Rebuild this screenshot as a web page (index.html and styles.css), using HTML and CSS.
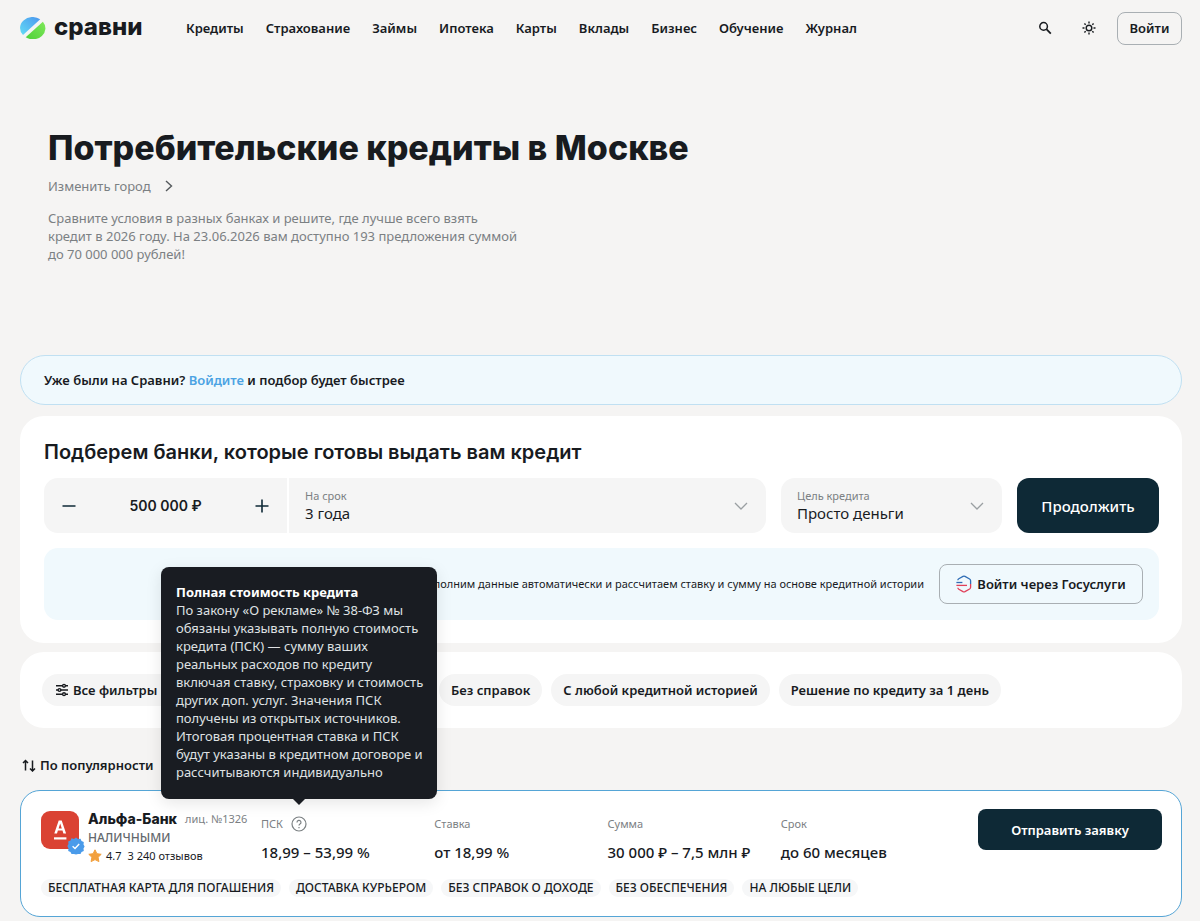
FILE: index.html
```
<!DOCTYPE html>
<html lang="ru">
<head>
<meta charset="utf-8">
<meta name="viewport" content="width=device-width, initial-scale=1">
<title>Потребительские кредиты в Москве</title>
<link rel="stylesheet" href="styles.css">
</head>
<body>
<header class="header">
  <a class="logo" href="#" aria-label="Сравни">
    <svg class="logo-mark" viewBox="0 0 26 22" aria-hidden="true">
      <defs>
        <linearGradient id="sky" x1="0" y1="1" x2="1" y2="0"><stop offset="0" stop-color="#63dcf5"/><stop offset="1" stop-color="#4b96ee"/></linearGradient>
        <linearGradient id="leaf" x1="0" y1="1" x2="1" y2="0"><stop offset="0" stop-color="#4fd038"/><stop offset="1" stop-color="#7fe85a"/></linearGradient>
      </defs>
      <path d="M3 18.1A12.500 11 0 0 1 20.200 2.300Z" fill="url(#sky)"/>
      <path d="M22.900 4.700A12.500 11 0 0 1 5.700 20.300Z" fill="url(#leaf)"/>
    </svg>
    <span class="logo-word">сравни</span>
  </a>
  <nav class="nav">
    <a href="#">Кредиты</a><a href="#">Страхование</a><a href="#">Займы</a><a href="#">Ипотека</a><a href="#">Карты</a><a href="#">Вклады</a><a href="#">Бизнес</a><a href="#">Обучение</a><a href="#">Журнал</a>
  </nav>
  <div class="tools">
    <button class="icon-button" type="button" aria-label="Поиск">
      <svg viewBox="0 0 14 14" fill="none" stroke="currentColor" aria-hidden="true"><circle cx="5.6" cy="5.4" r="3.8" stroke-width="1.5"/><path d="M8.4 8.2 12.8 12.6" stroke-width="1.8"/></svg>
    </button>
    <button class="icon-button" type="button" aria-label="Тема">
      <svg viewBox="0 0 14 14" fill="none" stroke="currentColor" stroke-width="1.4" aria-hidden="true"><circle cx="7" cy="7" r="2.8"/><path d="M7 .5v2M7 11.5v2M.5 7h2M11.5 7h2M2.4 2.4l1.3 1.3M10.3 10.3l1.3 1.3M2.4 11.6l1.3-1.3M10.3 3.7l1.3-1.3"/></svg>
    </button>
    <button class="outline-button login" type="button">Войти</button>
  </div>
</header>

<main class="page">
  <section class="hero">
    <h1>Потребительские кредиты в Москве</h1>
    <a class="city" href="#">Изменить город
      <svg viewBox="0 0 8 12" fill="none" stroke="currentColor" stroke-width="1.4" aria-hidden="true"><path d="M1 1l5.5 5L1 11"/></svg>
    </a>
    <p>Сравните условия в разных банках и решите, где лучше всего взять кредит в 2026 году. На 23.06.2026 вам доступно 193 предложения суммой до&nbsp;70&nbsp;000&nbsp;000&nbsp;рублей!</p>
  </section>

  <p class="notice">Уже были на Сравни? <a href="#">Войдите</a> и подбор будет быстрее</p>

  <section class="card picker">
    <h2>Подберем банки, которые готовы выдать вам кредит</h2>
    <form class="form">
      <div class="joined">
        <div class="stepper">
          <button type="button" aria-label="Уменьшить"><svg viewBox="0 0 14 14" fill="none" stroke="currentColor" stroke-width="1.6" aria-hidden="true"><path d="M.5 7h13"/></svg></button>
          <input type="text" aria-label="Сумма кредита" value="500 000 ₽">
          <button type="button" aria-label="Увеличить"><svg viewBox="0 0 14 14" fill="none" stroke="currentColor" stroke-width="1.6" aria-hidden="true"><path d="M.5 7h13M7 .5v13"/></svg></button>
        </div>
        <div class="field term">
          <div class="field-body">
            <label for="term">На срок</label>
            <select id="term"><option>3 года</option></select>
          </div>
          <svg class="chevron" viewBox="0 0 14 8" fill="none" stroke="currentColor" stroke-width="1.3" aria-hidden="true"><path d="M1 1l6 6 6-6"/></svg>
        </div>
      </div>
      <div class="field goal">
        <div class="field-body">
          <label for="goal">Цель кредита</label>
          <select id="goal"><option>Просто деньги</option></select>
        </div>
        <svg class="chevron" viewBox="0 0 14 8" fill="none" stroke="currentColor" stroke-width="1.3" aria-hidden="true"><path d="M1 1l6 6 6-6"/></svg>
      </div>
      <button class="primary continue" type="submit">Продолжить</button>
    </form>
    <div class="gov">
      <p>Заполним данные автоматически и рассчитаем ставку и сумму на основе кредитной истории</p>
      <button class="outline-button gov-button" type="button">
        <svg viewBox="0 0 16 18" fill="none" stroke-width="1.3" aria-hidden="true">
          <path d="M1.800 5.200Q1.900 4.300 2.800 3.800L7 1.400Q8 .9 9 1.400L13.600 4Q14.600 4.600 14.600 5.700V9" stroke="#2f6db5"/>
          <path d="M14.600 9V12.300Q14.600 13.400 13.600 14L9 16.600Q8 17.100 7 16.600L2.800 14.200Q1.900 13.700 1.800 12.800" stroke="#e0405a"/>
          <path d="M.4 7.500h6" stroke="#2f6db5"/>
          <path d="M.4 10.400h10.600" stroke="#e0405a"/>
        </svg>
        Войти через Госуслуги
      </button>
    </div>
  </section>

  <section class="card filters">
    <button class="chip all" type="button">
      <svg viewBox="0 0 14 14" fill="none" stroke="currentColor" stroke-width="1.4" aria-hidden="true"><path d="M1 2.8h12M1 7h12M1 11.2h12"/><circle cx="9" cy="2.8" r="1.4" fill="#f5f5f5"/><circle cx="4.500" cy="7" r="1.4" fill="#f5f5f5"/><circle cx="9" cy="11.2" r="1.4" fill="#f5f5f5"/></svg>
      Все фильтры
    </button>
    <button class="chip" type="button">Без справок</button>
    <button class="chip" type="button">С любой кредитной историей</button>
    <button class="chip" type="button">Решение по кредиту за 1 день</button>
  </section>

  <button class="sort" type="button">
    <svg viewBox="0 0 14 14" fill="none" stroke="currentColor" stroke-width="1.5" aria-hidden="true"><path d="M3.5 12.500V2.500M1 5l2.500-2.500L6 5M10.500 2.500V13M8 10.500l2.500 2.500 2.500-2.500"/></svg>
    По популярности
  </button>

  <article class="offer">
    <div class="offer-main">
      <div class="bank">
        <div class="bank-logo">
          <svg viewBox="0 0 38 38" aria-hidden="true"><path fill-rule="evenodd" d="M13.300 22.500 17.700 9.500h3L25.100 22.500h-2.700l-.9-2.900h-4.600l-.9 2.900zM17.600 17.400h3.200l-1.600-5z" fill="#fff"/><path d="M13 27.400h12.400" stroke="#fff" stroke-width="2.200"/></svg>
          <svg class="verified" viewBox="0 0 18 18" aria-hidden="true"><path d="M9 .6l2 1.500 2.500-.3 1 2.300 2.300 1-.3 2.500L17.600 9.400l-1.100 2 .3 2.500-2.300 1-1 2.200-2.500-.2L9 17.600l-2-.7-2.500.2-1-2.200-2.300-1 .3-2.500L.4 9l1.100-2-.3-2.500 2.300-1 1-2.200L7 2z" fill="#4a9bea"/><path d="M5.600 9.300 8 11.500l4.200-4.400" fill="none" stroke="#fff" stroke-width="1.4"/></svg>
        </div>
        <div class="bank-info">
          <div class="bank-name"><h3>Альфа-Банк</h3><span>лиц. №1326</span></div>
          <div class="product">НАЛИЧНЫМИ</div>
          <div class="rating">
            <svg viewBox="0 0 14 14" aria-hidden="true"><path d="M7 .8l1.900 3.900 4.300.6-3.100 3 .8 4.300L7 10.600l-3.900 2 .8-4.300-3.100-3 4.300-.6z" fill="#f2a03d" stroke="#f2a03d" stroke-linejoin="round"/></svg>
            <span>4.7</span><a href="#">3 240 отзывов</a>
          </div>
        </div>
      </div>
      <dl class="terms">
        <div>
          <dt>ПСК
            <span class="hint">
              <button type="button" aria-label="Полная стоимость кредита" aria-describedby="psk">
                <svg viewBox="0 0 16 16" fill="none" stroke="currentColor" stroke-width="1.2" aria-hidden="true"><circle cx="8" cy="8" r="7"/><path d="M6 6.500a2 2 0 1 1 3 1.600c-.7.400-1 .7-1 1.500M8 10.900v1.300"/></svg>
              </button>
              <span class="tooltip" id="psk" role="tooltip"><strong>Полная стоимость кредита</strong>По закону «О рекламе» № 38-ФЗ мы обязаны указывать полную стоимость кредита (ПСК) — сумму ваших реальных расходов по кредиту включая ставку, страховку и стоимость других доп. услуг. Значения ПСК получены из открытых источников. Итоговая процентная ставка и ПСК будут указаны в кредитном договоре и рассчитываются индивидуально</span>
            </span>
          </dt>
          <dd>18,99 – 53,99 %</dd>
        </div>
        <div><dt>Ставка</dt><dd>от 18,99 %</dd></div>
        <div><dt>Сумма</dt><dd>30 000 ₽ – 7,5 млн ₽</dd></div>
        <div><dt>Срок</dt><dd>до 60 месяцев</dd></div>
      </dl>
      <button class="primary apply" type="button">Отправить заявку</button>
    </div>
    <ul class="tags">
      <li>БЕСПЛАТНАЯ КАРТА ДЛЯ ПОГАШЕНИЯ</li><li>ДОСТАВКА КУРЬЕРОМ</li><li>БЕЗ СПРАВОК О ДОХОДЕ</li><li>БЕЗ ОБЕСПЕЧЕНИЯ</li><li>НА ЛЮБЫЕ ЦЕЛИ</li>
    </ul>
  </article>
</main>
</body>
</html>
```
FILE: styles.css
```
:root {
  --ink: #181b1f;
  --muted: #7b8083;
  --navy: #0e2936;
  --field: #f5f5f5;
  --sky: #f0f9fd;
  --display: Inter, "Liberation Sans", sans-serif;
}
* { box-sizing: border-box; }
body {
  margin: 0;
  background: #f5f4f3;
  color: var(--ink);
  font: 600 13px/18px "Noto Sans", sans-serif;
}
h1, h2, h3, p, ul, dl, dd { margin: 0; padding: 0; }
a { color: inherit; text-decoration: none; }
button, input, select { font: inherit; color: inherit; }
button { padding: 0; border: 0; background: none; cursor: pointer; }
svg { display: block; flex: none; }

.header { display: flex; align-items: center; height: 56px; padding: 0 18px 0 20px; }
.logo { display: flex; align-items: center; gap: 8px; width: 166px; }
.logo-mark { width: 26px; height: 22px; }
.logo-word { padding-bottom: 2px; font: 800 24px/26px var(--display); }
.nav { display: flex; gap: 22px; flex: 1; }
.tools { display: flex; align-items: center; gap: 12px; }
.icon-button { display: grid; place-items: center; width: 32px; height: 32px; }
.icon-button svg { width: 14px; height: 14px; }
.outline-button { border: 1px solid #a9afb3; border-radius: 8px; }
.login { width: 65px; height: 33px; }

.page { padding: 0 18px 4px 20px; }
.hero { min-height: 299px; padding: 72px 28px 0; color: var(--muted); font-weight: 400; }
.hero h1 { color: var(--ink); font: 800 34px/40px var(--display); }
.city { display: inline-flex; align-items: center; gap: 14px; margin: 9px 0 14px; }
.city svg { width: 8px; height: 12px; color: #55595c; }
.hero p { max-width: 470px; }

.notice { padding: 15px 23px; border: 1px solid #c0e0f2; border-radius: 25px; background: var(--sky); }
.notice a { color: #4ba3e3; }
.card { border-radius: 24px; background: #fff; }
.picker { margin-top: 11px; padding: 23px 23px 23px 24px; }
.picker h2 { font: 600 20px/26px var(--display); }
.form { display: flex; gap: 15px; margin-top: 13px; }
.joined { display: flex; flex: 1; gap: 2px; overflow: hidden; border-radius: 14px; }
.stepper { display: flex; align-items: center; width: 243px; height: 55px; padding: 0 18px; background: var(--field); }
.stepper input { flex: 1; min-width: 0; border: 0; background: none; text-align: center; font: 600 14px/20px var(--display); }
.stepper button { color: var(--navy); }
.stepper svg { width: 14px; height: 14px; }
.field { display: flex; align-items: center; padding: 0 18px 0 16px; background: var(--field); }
.field-body { display: flex; flex: 1; flex-direction: column; min-width: 0; }
.field label { color: var(--muted); font: 400 11px/15px "Noto Sans", sans-serif; }
.field select { appearance: none; padding: 0; border: 0; background: none; font-size: 15px; font-weight: 400; line-height: 20px; }
.term { flex: 1; }
.goal { width: 221px; border-radius: 14px; }
.chevron { width: 14px; height: 8px; color: #9a9fa2; }
.primary { background: var(--navy); color: #fff; }
.continue { width: 142px; border-radius: 12px; font-size: 15px; font-weight: 500; }
.gov { display: flex; align-items: center; justify-content: flex-end; gap: 15px; margin-top: 15px; padding: 16px; border-radius: 14px; background: var(--sky); }
.gov p { font-size: 11px; font-weight: 400; }
.gov-button { display: flex; align-items: center; justify-content: center; gap: 5px; width: 204px; height: 40px; }
.gov-button svg { width: 16px; height: 18px; }

.filters { display: flex; gap: 9px; margin-top: 9px; padding: 22px; }
.chip { display: flex; align-items: center; gap: 4px; height: 32px; padding: 0 12px; border-radius: 16px; background: var(--field); }
.chip.all { width: 140px; margin-right: 248px; padding-left: 13px; }
.chip svg, .sort svg { width: 14px; height: 14px; }
.sort { display: flex; align-items: center; gap: 4px; margin: 28px 0 16px 2px; }

.offer { padding: 18px 19px 19px 20px; border: 1px solid #55a5d6; border-radius: 20px; background: #fff; }
.offer-main { display: flex; }
.bank { display: flex; gap: 9px; width: 220px; }
.bank-logo { position: relative; flex: none; width: 38px; height: 38px; margin-top: 2px; border-radius: 9px; background: #da4233; }
.verified { position: absolute; right: -6px; bottom: -6px; width: 18px; height: 18px; }
.bank-info { color: #63686c; }
.bank-name { display: flex; align-items: center; gap: 8px; height: 20px; white-space: nowrap; }
.bank-name h3 { color: var(--ink); font: 800 14px/20px var(--display); }
.bank-name span { color: var(--muted); font-size: 11px; font-weight: 400; }
.product { font-size: 12px; font-weight: 500; line-height: 17px; }
.rating { display: flex; align-items: center; gap: 6px; color: var(--ink); font-size: 11px; font-weight: 400; line-height: 20px; }
.rating svg { width: 14px; height: 14px; margin-right: -2px; }
.terms { display: grid; grid-template-columns: repeat(4, 1fr); flex: 1; margin-right: 24px; padding-top: 6px; white-space: nowrap; }
.terms dt { display: flex; align-items: center; gap: 8px; height: 18px; color: var(--muted); font-size: 11px; font-weight: 400; }
.terms dd { margin-top: 9px; font-size: 15px; font-weight: 500; line-height: 20px; }
.hint { position: relative; }
.hint button { display: block; }
.hint button svg { width: 16px; height: 16px; }
.tooltip { position: absolute; left: 50%; bottom: 100%; z-index: 2; width: 276px; margin: 0 0 17px -138px; padding: 16px 13px 18px 15px; border-radius: 8px; background: #191c22; color: #dfe1e3; box-shadow: 0 4px 16px #0000001a; font-size: 13px; line-height: 18px; white-space: normal; }
.tooltip::after { content: ""; position: absolute; top: 100%; left: 50%; margin-left: -6px; border: 6px solid transparent; border-top-color: #191c22; border-bottom: 0; }
.tooltip strong { display: block; color: #fff; font-weight: 700; }
.apply { width: 184px; height: 41px; border-radius: 8px; }
.tags { display: flex; gap: 8px; margin-top: 13px; list-style: none; }
.tags li { padding: 0 7px; border-radius: 9px; background: #f6f7f8; font-size: 12px; font-weight: 500; line-height: 18px; white-space: nowrap; }
```
